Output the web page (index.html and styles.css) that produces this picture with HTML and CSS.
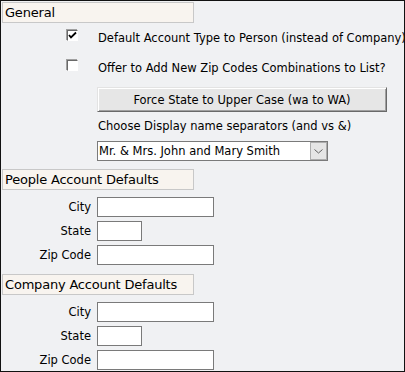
FILE: index.html
```html
<!DOCTYPE html>
<html lang="en">
<head>
  <title>Account Defaults</title>
  <link rel="stylesheet" href="styles.css">
</head>
<body>
  <div class="panel">
    <div class="section-head">General</div>
    <div class="general">
      <label class="check-row">
        <span class="chk">
          <svg width="9" height="9" viewBox="0 0 9 9"><polyline points="1,4 3,6.5 8,1.5" fill="none" stroke="#000" stroke-width="1.8"/></svg>
        </span>
        Default Account Type to Person (instead of Company)
      </label>
      <label class="check-row second">
        <span class="chk"></span>
        Offer to Add New Zip Codes Combinations to List?
      </label>
      <button class="btn" type="button">Force State to Upper Case (wa to WA)</button>
      <div class="note">Choose Display name separators (and vs &amp;)</div>
      <div class="combo">
        <span class="combo-text">Mr. &amp; Mrs. John and Mary Smith</span>
        <span class="combo-arrow">
          <svg width="9" height="5" viewBox="0 0 9 5"><polyline points="0.5,0.5 4.5,4 8.5,0.5" fill="none" stroke="#606060" stroke-width="1"/></svg>
        </span>
      </div>
    </div>

    <div class="section-head">People Account Defaults</div>
    <div class="fields">
      <label class="field-label">City</label>
      <span class="box wide"></span>
      <label class="field-label">State</label>
      <span class="box narrow"></span>
      <label class="field-label">Zip Code</label>
      <span class="box wide"></span>
    </div>

    <div class="section-head">Company Account Defaults</div>
    <div class="fields">
      <label class="field-label">City</label>
      <span class="box wide"></span>
      <label class="field-label">State</label>
      <span class="box narrow"></span>
      <label class="field-label">Zip Code</label>
      <span class="box wide"></span>
    </div>
  </div>
</body>
</html>
```

FILE: styles.css
```css
body {
  margin: 0;
  padding: 0;
  font-family: "DejaVu Sans", Verdana, sans-serif;
  font-size: 11.5px;
  color: #000;
}
.panel {
  width: 405px;
  height: 372px;
  box-sizing: border-box;
  border: 1px solid #111;
  padding: 1px;
  background-color: #f0f1f3;
  overflow: hidden;
}
.section-head {
  width: 192px;
  height: 21px;
  box-sizing: border-box;
  border: 1px solid #c8c8c8;
  background-color: #f8f4ef;
  font-size: 13px;
  letter-spacing: -0.2px;
  line-height: 19px;
  padding-left: 2px;
}
.general {
  display: flex;
  flex-direction: column;
  align-items: flex-start;
  padding-bottom: 8px;
}
.check-row {
  display: flex;
  align-items: flex-start;
  height: 20px;
  margin-top: 6px;
  padding-left: 65px;
  line-height: 18px;
  white-space: nowrap;
}
.check-row.second {
  margin-top: 10px;
}
.chk {
  width: 11px;
  height: 11px;
  box-sizing: border-box;
  margin-top: 1px;
  margin-right: 20px;
  background-color: #fff;
  border-top: 1px solid #696969;
  border-left: 1px solid #696969;
  border-right: 1px solid #fff;
  border-bottom: 1px solid #fff;
  box-shadow: -1px -1px 0 #a0a0a0;
  display: flex;
  align-items: center;
  justify-content: center;
}
.btn {
  margin-top: 8px;
  margin-left: 95px;
  width: 290px;
  height: 25px;
  font-family: inherit;
  font-size: 11.5px;
  color: #000;
  background-color: #e6e6e6;
  border-top: 1px solid #e3e3e3;
  border-left: 1px solid #e3e3e3;
  border-right: 1px solid #696969;
  border-bottom: 1px solid #696969;
  box-shadow: inset 1px 1px 0 #fff, inset -1px -1px 0 #a0a0a0;
  padding: 0;
}
.note {
  margin-top: 5px;
  margin-left: 96px;
  line-height: 18px;
}
.combo {
  margin-top: 6px;
  margin-left: 95px;
  width: 231px;
  height: 20px;
  box-sizing: border-box;
  border: 1px solid #7a7a7a;
  background-color: #fff;
  display: flex;
  align-items: center;
  justify-content: space-between;
}
.combo-text {
  padding-left: 1px;
}
.combo-arrow {
  width: 17px;
  height: 18px;
  box-sizing: border-box;
  border: 1px solid #adadad;
  background-color: #e5e5e5;
  display: flex;
  align-items: center;
  justify-content: center;
}
.fields {
  display: grid;
  grid-template-columns: 89px auto;
  column-gap: 6px;
  row-gap: 4px;
  align-items: center;
  justify-items: start;
  padding: 7px 0 9px;
}
.field-label {
  justify-self: end;
}
.box {
  height: 20px;
  box-sizing: border-box;
  border: 1px solid #7a7a7a;
  background-color: #fff;
}
.box.wide {
  width: 117px;
}
.box.narrow {
  width: 45px;
}
```
